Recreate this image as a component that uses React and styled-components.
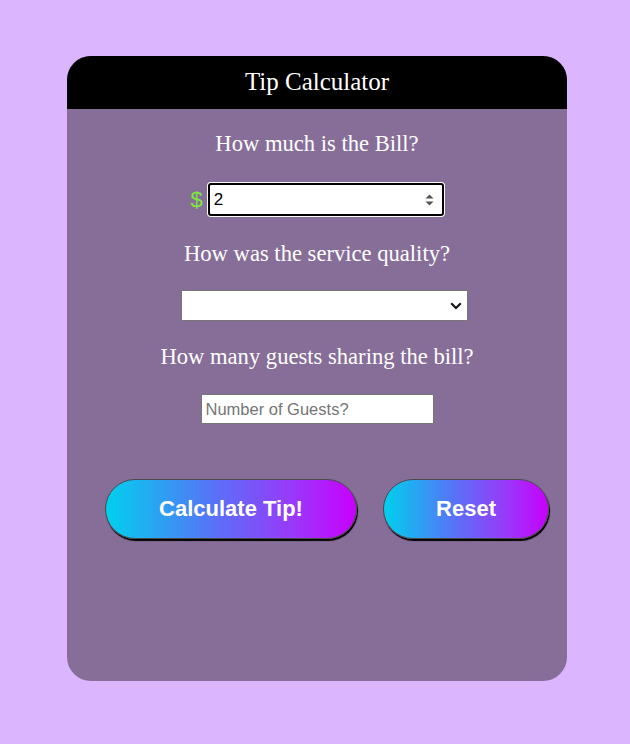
import React from "react";
import styled, { createGlobalStyle } from "styled-components";

const Global = createGlobalStyle`
  html, body { margin: 0; padding: 0; background: #dbb5fd; }
  body { font-family: "Liberation Serif", "Times New Roman", serif; }
`;

const Page = styled.div`
  padding: 56px 0 0 67px;
  min-height: 688px;
`;

const Card = styled.div`
  width: 500px;
  height: 625px;
  border-radius: 24px;
  overflow: hidden;
  background: #866e98;
  display: flex;
  flex-direction: column;
  align-items: center;
`;

const Header = styled.div`
  align-self: stretch;
  height: 53px;
  background: #000;
  color: #fff;
  font-size: 25px;
  display: flex;
  align-items: center;
  justify-content: center;
  padding-bottom: 1px;
  box-sizing: border-box;
`;

const Label = styled.div`
  color: #fff;
  font-size: 22.6px;
  line-height: 26px;
  margin-top: ${(p) => p.$mt}px;
  text-align: center;
`;

const BillRow = styled.div`
  display: flex;
  align-items: center;
  gap: 5px;
  margin-top: 26px;
`;

const Dollar = styled.span`
  color: #7ce83a;
  font-family: "Liberation Sans", Arial, sans-serif;
  font-size: 22px;
  line-height: 26px;
`;

const BillWrap = styled.div`
  position: relative;
  width: 236px;
  height: 33px;
  box-sizing: border-box;
  border: 2px solid #000;
  border-radius: 3px;
  background: #fff;
  box-shadow: 0 0 0 1px #fff;
  display: flex;
  align-items: center;
`;

const BillInput = styled.input`
  border: none;
  outline: none;
  background: transparent;
  width: 100%;
  height: 100%;
  padding: 0 24px 0 4px;
  box-sizing: border-box;
  font-family: "Liberation Sans", Arial, sans-serif;
  font-size: 17px;
  color: #000;
`;

const Spinner = styled.svg`
  position: absolute;
  right: 8px;
  top: 50%;
  transform: translateY(-50%);
  pointer-events: none;
`;

const SelectWrap = styled.div`
  position: relative;
  margin-top: 23px;
  margin-left: 15px;
  width: 287px;
  height: 31px;
`;

const Select = styled.select`
  appearance: none;
  -webkit-appearance: none;
  width: 100%;
  height: 100%;
  background: #fff;
  border: 1px solid #767676;
  border-radius: 0;
  font-family: "Liberation Sans", Arial, sans-serif;
  font-size: 16px;
  outline: none;
`;

const Chevron = styled.svg`
  position: absolute;
  right: 6px;
  top: 50%;
  transform: translateY(-50%);
  pointer-events: none;
`;

const GuestInput = styled.input`
  margin-top: 24px;
  width: 233px;
  height: 30px;
  box-sizing: border-box;
  border: 1px solid #767676;
  padding: 0 4px;
  background: #fff;
  font-family: "Liberation Sans", Arial, sans-serif;
  font-size: 16.5px;
  outline: none;
  &::placeholder { color: #757575; }
`;

const ButtonRow = styled.div`
  display: flex;
  gap: 26px;
  margin-top: 55px;
  margin-left: 20px;
`;

const Button = styled.button`
  width: ${(p) => p.$w}px;
  height: 60px;
  border-radius: 30px;
  border: 1px solid #4a4a4a;
  box-shadow: 1px 2px 1px #000;
  background: linear-gradient(to right, #00d0ee, #5c6ef8 45%, #9a38fa 75%, #c800fe);
  color: #fff;
  font-family: "Liberation Sans", Arial, sans-serif;
  font-weight: bold;
  font-size: 22px;
  cursor: pointer;
  padding: 0;
`;

export default function App() {
  return (
    <>
      <Global />
      <Page>
        <Card>
          <Header>Tip Calculator</Header>
          <Label $mt={22}>How much is the Bill?</Label>
          <BillRow>
            <Dollar>$</Dollar>
            <BillWrap>
              <BillInput type="text" defaultValue="2" />
              <Spinner width="9" height="12" viewBox="0 0 9 12">
                <path d="M4.5 0.5 L8.5 4.5 H0.5 Z" fill="#555" />
                <path d="M4.5 11.5 L8.5 7.5 H0.5 Z" fill="#555" />
              </Spinner>
            </BillWrap>
          </BillRow>
          <Label $mt={25}>How was the service quality?</Label>
          <SelectWrap>
            <Select defaultValue="">
              <option value=""></option>
              <option value="0.3">30% - Outstanding</option>
              <option value="0.2">20% - Good</option>
              <option value="0.15">15% - It was OK</option>
              <option value="0.1">10% - Bad</option>
              <option value="0.05">5% - Terrible</option>
            </Select>
            <Chevron width="12" height="8" viewBox="0 0 12 8">
              <path d="M1.2 1.2 L6 6 L10.8 1.2" fill="none" stroke="#111" strokeWidth="2" />
            </Chevron>
          </SelectWrap>
          <Label $mt={23}>How many guests sharing the bill?</Label>
          <GuestInput type="text" placeholder="Number of Guests?" />
          <ButtonRow>
            <Button $w={252}>Calculate Tip!</Button>
            <Button $w={166}>Reset</Button>
          </ButtonRow>
        </Card>
      </Page>
    </>
  );
}
